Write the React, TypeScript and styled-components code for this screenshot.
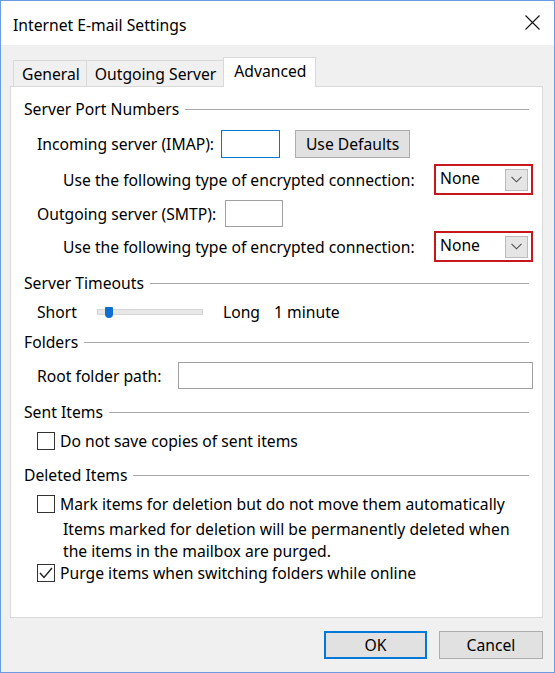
import React from "react";
import styled, { createGlobalStyle, css } from "styled-components";

const GlobalStyle = createGlobalStyle`
  html, body { margin: 0; padding: 0; background: #ffffff; }
  body { font-family: "Noto Sans", "Open Sans", sans-serif; color: #000; }
  * { box-sizing: border-box; }
`;

const FONT = `"Noto Sans", "Open Sans", sans-serif`;

const Window = styled.div`
  width: 555px;
  height: 673px;
  border: 1px solid #6a9be3;
  background: #f0f0f0;
  display: flex;
  flex-direction: column;
  font-family: ${FONT};
  font-size: 15.7px;
`;

const TitleBar = styled.div`
  height: 44px;
  background: #ffffff;
  display: flex;
  align-items: center;
  justify-content: space-between;
  padding: 3px 14px 0 12px;
  flex-shrink: 0;
`;

const Title = styled.div`
  color: #000;
  white-space: nowrap;
`;

const CloseButton = styled.div`
  width: 16px;
  height: 16px;
  display: flex;
  align-items: center;
  justify-content: center;
  margin-top: -4px;
`;

const Body = styled.div`
  flex: 1;
  display: flex;
  flex-direction: column;
  padding: 11px 11px 0 9px;
`;

const TabList = styled.div`
  display: flex;
  align-items: flex-end;
  height: 30px;
  padding-left: 3px;
`;

const Tab = styled.div<{ $active?: boolean }>`
  height: 26px;
  display: flex;
  align-items: center;
  padding: 0 7px 0 8px;
  border: 1px solid #d9d9d9;
  border-bottom: none;
  background: #f0f0f0;
  white-space: nowrap;
  margin-left: -1px;
  &:first-child { margin-left: 0; padding-right: 6px; }
  ${(p) =>
    p.$active &&
    css`
      height: 30px;
      padding: 0 9px 3px 10px;
      background: #ffffff;
      margin-bottom: -1px;
      position: relative;
      z-index: 1;
    `}
`;

const Panel = styled.div`
  height: 532px;
  background: #ffffff;
  border: 1px solid #d9d9d9;
  display: flex;
  flex-direction: column;
  padding: 0 9px 0 13px;
`;

const GroupHeader = styled.div<{ $top: number }>`
  height: 20px;
  margin-top: ${(p) => p.$top}px;
  display: flex;
  align-items: center;
  gap: 6px;
  padding-right: 4px;
  white-space: nowrap;
`;

const Rule = styled.div`
  flex: 1;
  height: 1px;
  background: #a8a8a8;
  margin-top: 1px;
`;

const Row = styled.div<{ $top: number; $h: number; $indent?: number }>`
  display: flex;
  align-items: center;
  height: ${(p) => p.$h}px;
  margin-top: ${(p) => p.$top}px;
  padding-left: ${(p) => p.$indent ?? 13}px;
  white-space: nowrap;
`;

const Label = styled.span<{ $gap?: number }>`
  margin-right: ${(p) => p.$gap ?? 0}px;
`;

const TextBox = styled.div<{ $focused?: boolean; $w?: number; $h: number }>`
  width: ${(p) => (p.$w ? `${p.$w}px` : "auto")};
  flex: ${(p) => (p.$w ? "none" : "1")};
  height: ${(p) => p.$h}px;
  background: #ffffff;
  border: 1px solid ${(p) => (p.$focused ? "#0078d7" : "#a0a0a0")};
`;

const PushButton = styled.div<{ $w: number; $default?: boolean; $ml?: number }>`
  width: ${(p) => p.$w}px;
  height: 28px;
  margin-left: ${(p) => p.$ml ?? 0}px;
  display: flex;
  align-items: center;
  justify-content: center;
  background: #e1e1e1;
  border: ${(p) => (p.$default ? "2px solid #0078d7" : "1px solid #adadad")};
  white-space: nowrap;
`;

const ComboBox = styled.div`
  margin-left: auto;
  width: 99px;
  height: 31px;
  border: 2px solid #c8161d;
  background: #ffffff;
  display: flex;
  align-items: center;
  justify-content: space-between;
  padding: 0 3px 0 4px;
`;

const ComboValue = styled.span`
  margin-top: -3px;
`;

const ComboArrow = styled.div`
  width: 23px;
  height: 22px;
  background: #e5e5e5;
  border: 1px solid #bcbcbc;
  display: flex;
  align-items: center;
  justify-content: center;
`;

const SliderTrack = styled.div`
  position: relative;
  width: 106px;
  height: 6px;
  margin: 0 20px 0 20px;
  background: #e7e7e7;
  border: 1px solid #d6d6d6;
`;

const SliderThumb = styled.div`
  position: absolute;
  left: 7px;
  top: -3px;
  width: 8px;
  height: 11px;
  background: #0f6fd0;
  border-radius: 1px 1px 4px 4px;
`;

const Check = styled.div`
  width: 18px;
  height: 18px;
  border: 1px solid #333333;
  background: #ffffff;
  margin-right: 5px;
  display: flex;
  align-items: center;
  justify-content: center;
  flex: none;
`;

const Note = styled.div`
  margin-top: 5px;
  padding-left: 39px;
  display: flex;
  flex-direction: column;
`;

const NoteLine = styled.div`
  height: 21.5px;
  line-height: 21.5px;
  white-space: nowrap;
`;

const Footer = styled.div`
  display: flex;
  justify-content: flex-end;
  gap: 12px;
  padding-top: 13px;
`;

const Chevron = () => (
  <svg width="11" height="7" viewBox="0 0 11 7">
    <polyline points="0.5,0.8 5.5,5.8 10.5,0.8" fill="none" stroke="#505050" strokeWidth="1.1" />
  </svg>
);

const CheckMark = () => (
  <svg width="14" height="12" viewBox="0 0 14 12">
    <polyline points="1,6 5,10.5 13,1" fill="none" stroke="#222" strokeWidth="1.4" />
  </svg>
);

const CheckBox: React.FC<{ checked?: boolean }> = ({ checked }) => (
  <Check>{checked && <CheckMark />}</Check>
);

const Group: React.FC<{ top: number; title: string }> = ({ top, title }) => (
  <GroupHeader $top={top}>
    <span>{title}</span>
    <Rule />
  </GroupHeader>
);

export default function App() {
  return (
    <>
      <GlobalStyle />
      <Window>
        <TitleBar>
          <Title>Internet E-mail Settings</Title>
          <CloseButton>
            <svg width="15" height="15" viewBox="0 0 15 15">
              <path d="M0.5 0.5 L14.5 14.5 M14.5 0.5 L0.5 14.5" stroke="#111" strokeWidth="1.1" fill="none" />
            </svg>
          </CloseButton>
        </TitleBar>
        <Body>
          <TabList>
            <Tab>General</Tab>
            <Tab>Outgoing Server</Tab>
            <Tab $active>Advanced</Tab>
          </TabList>
          <Panel>
            <Group top={12} title="Server Port Numbers" />
            <Row $top={10} $h={29}>
              <Label $gap={7}>Incoming server (IMAP):</Label>
              <TextBox $focused $w={59} $h={28} />
              <PushButton $w={115} $ml={15}>Use Defaults</PushButton>
            </Row>
            <Row $top={6} $h={31} $indent={39}>
              <Label>Use the following type of encrypted connection:</Label>
              <ComboBox>
                <ComboValue>None</ComboValue>
                <ComboArrow>
                  <Chevron />
                </ComboArrow>
              </ComboBox>
            </Row>
            <Row $top={5} $h={27}>
              <Label $gap={9}>Outgoing server (SMTP):</Label>
              <TextBox $w={58} $h={27} />
            </Row>
            <Row $top={4} $h={31} $indent={39}>
              <Label>Use the following type of encrypted connection:</Label>
              <ComboBox>
                <ComboValue>None</ComboValue>
                <ComboArrow>
                  <Chevron />
                </ComboArrow>
              </ComboBox>
            </Row>
            <Group top={11} title="Server Timeouts" />
            <Row $top={9} $h={20}>
              <Label>Short</Label>
              <SliderTrack>
                <SliderThumb />
              </SliderTrack>
              <Label $gap={14}>Long</Label>
              <Label>1 minute</Label>
            </Row>
            <Group top={10} title="Folders" />
            <Row $top={10} $h={27}>
              <Label $gap={17}>Root folder path:</Label>
              <TextBox $h={27} />
            </Row>
            <Group top={13} title="Sent Items" />
            <Row $top={9} $h={20}>
              <CheckBox />
              <Label>Do not save copies of sent items</Label>
            </Row>
            <Group top={14} title="Deleted Items" />
            <Row $top={9} $h={20}>
              <CheckBox />
              <Label>Mark items for deletion but do not move them automatically</Label>
            </Row>
            <Note>
              <NoteLine>Items marked for deletion will be permanently deleted when</NoteLine>
              <NoteLine>the items in the mailbox are purged.</NoteLine>
            </Note>
            <Row $top={1} $h={20}>
              <CheckBox checked />
              <Label>Purge items when switching folders while online</Label>
            </Row>
          </Panel>
          <Footer>
            <PushButton $w={103} $default>OK</PushButton>
            <PushButton $w={104}>Cancel</PushButton>
          </Footer>
        </Body>
      </Window>
    </>
  );
}
